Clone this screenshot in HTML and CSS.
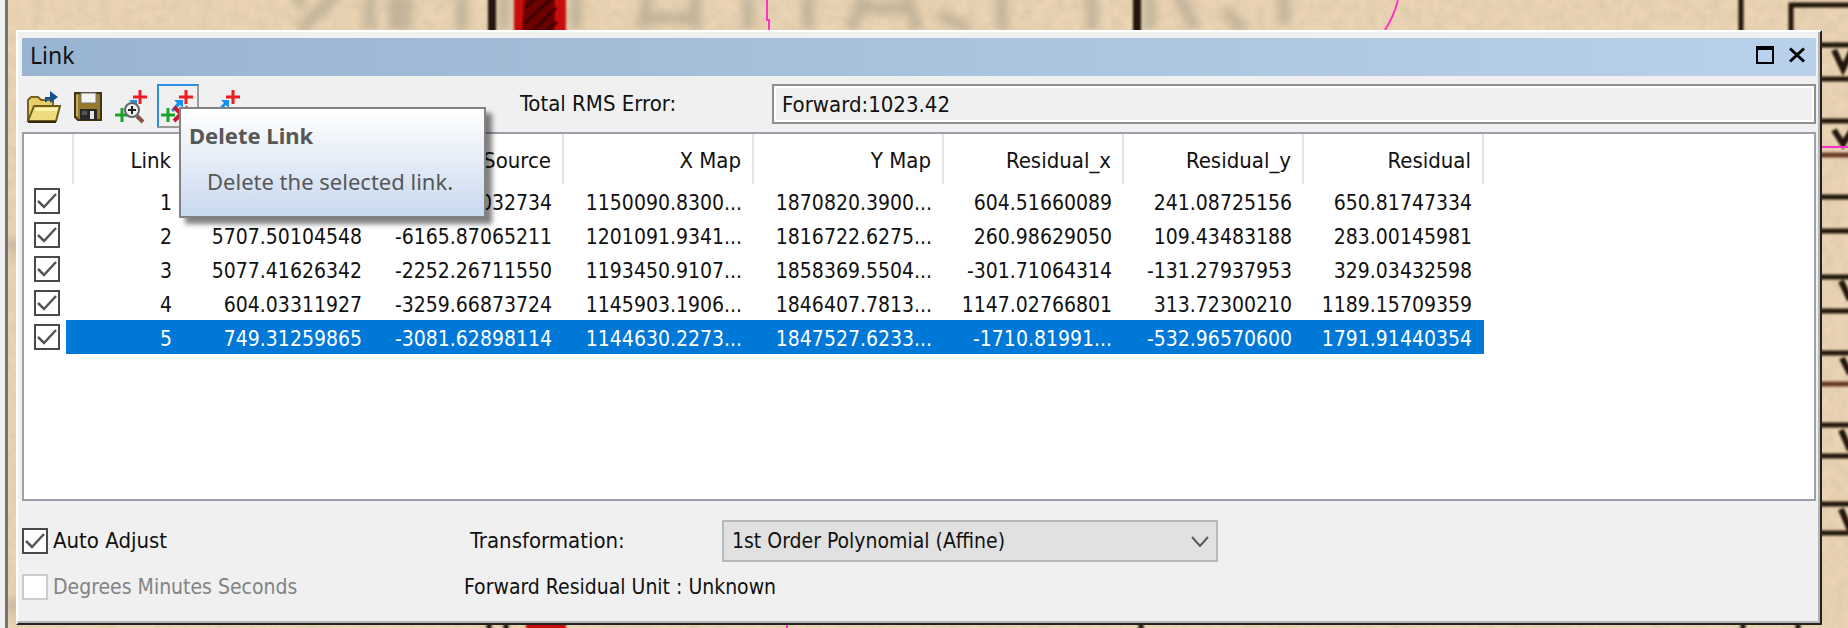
FILE: index.html
```html
<!DOCTYPE html>
<html lang="en">
<head>
<meta charset="utf-8">
<title>Link</title>
<link rel="stylesheet" href="styles.css">
</head>
<body>
<svg class="map" viewBox="0 0 1848 628" preserveAspectRatio="xMaxYMin slice" aria-hidden="true">
  <defs>
    <filter id="grain" x="0" y="0" width="100%" height="100%">
      <feTurbulence type="fractalNoise" baseFrequency="0.09" numOctaves="3" seed="4"/>
      <feColorMatrix values="0 0 0 0 .5  0 0 0 0 .4  0 0 0 0 .28  .9 0 0 0 -.3"/>
    </filter>
    <filter id="soft"><feGaussianBlur stdDeviation="4"/></filter>
    <filter id="ink" x="-5%" y="-5%" width="110%" height="110%"><feGaussianBlur stdDeviation="0.8"/></filter>
  </defs>
  <rect width="1848" height="628" fill="#ead4b3"/>
  <g filter="url(#soft)" fill="none" stroke="#9c9583" stroke-opacity=".5">
    <path stroke-width="12" d="M300-5V8M335-5L300 30M370-5V30M394-5V30M406-5V30M462-5V30M504-5V30M576-5V30"/>
    <path stroke-width="12" d="M648-5L642 30M642 18H700M695-5V30M748-5V30M808-5V30M850 30L866-5M860 8H905M905-5L918 30M938 14L970 30M1002-5V30M1092-5V30M1150-5V30M1178-5L1196 28M1224 10L1245 30M1284-5V24"/>
    <path stroke-width="14" stroke-opacity=".5" d="M8 246H18M8 606H18"/>
  </g>
  <rect x="8" width="1840" height="628" filter="url(#grain)" opacity=".5"/>
  <g filter="url(#ink)">
    <path fill="#c90808" d="M514-4H566V32H514z"/>
    <path fill="#6e0305" d="M524-4H555V32H522z"/>
    <path stroke="#290103" stroke-width="3" d="M525 8L538-4M524 24L552-2M532 32L556 8M545 32L557 22"/>
    <g fill="none" stroke="#211708" stroke-width="5">
      <path stroke-width="8" d="M492-4V34M1137-4V34"/>
      <path d="M1741-4V34M1791 34V5H1850"/>
      <path d="M1820 45H1850M1820 79H1850M1820 121H1850M1820 197H1850M1820 231H1850M1820 277H1850M1820 311H1850M1820 353H1850M1820 425H1850M1820 456H1850M1820 504H1850M1820 533H1850"/>
      <path stroke="#6b3b28" d="M1820 155H1850M1820 384H1850"/>
      <path stroke-width="6" d="M1834 50L1843 69L1852 50M1834 130L1843 144L1852 130M1841 281L1850 300M1842 358L1850 374M1841 430L1850 450M1841 509L1850 530"/>
      <path d="M489 622V634M506 622V634M1141 622V634M1743 622V634M1798 622V634"/>
    </g>
    <path fill="#c90808" d="M526 622H566V634H526z"/>
  </g>
  <path fill="none" stroke="#ff32c8" stroke-width="2" d="M767 0V20H769V30M1398 0Q1394 16 1385 30M1820 147H1848M787 622V628"/>
  <rect width="6" height="628" fill="#f0f0f0"/>
  <rect x="5" width="3" height="628" fill="#77746f"/>
</svg>

<main class="window">
  <header class="titlebar">
    <h1 class="title">Link</h1>
    <div class="window-buttons">
      <button class="window-button" aria-label="Maximize"><svg width="18" height="18" viewBox="0 0 18 18"><path d="M1 1H17V17H1z" fill="none" stroke="#000" stroke-width="2"/><path d="M0 0H18V4H0z"/></svg></button>
      <button class="window-button" aria-label="Close"><svg width="18" height="18" viewBox="0 0 18 18"><path d="M2 2.500L16 15.500M16 2.500L2 15.500" stroke="#000" stroke-width="3"/></svg></button>
    </div>
  </header>

  <section class="toolbar">
    <div class="tools">
      <button class="tool" aria-label="Load">
        <svg width="36" height="36" viewBox="0 0 36 36"><path d="M3 33V12L6 9H13L16 12H28V18" fill="#e9cf69" stroke="#796321" stroke-width="2"/><path d="M3 33L9 18H35L31 33z" fill="#eddc7e" stroke="#705b1d" stroke-width="2"/><path d="M11 20H33L32 23H10z" fill="#fff3a8"/><path d="M3 34H31" stroke="#352b10" stroke-width="2"/><path d="M20 14V9H25V3L33 9L25 15V11H22V14z" fill="#15518c"/></svg>
      </button>
      <button class="tool" aria-label="Save">
        <svg width="36" height="36" viewBox="0 0 36 36"><path d="M5 5H31V32H8L5 29z" fill="#967a2b" stroke="#40330f" stroke-width="2"/><path d="M7 7V28" stroke="#c6ad61" stroke-width="2"/><path d="M11 5H26V15H11z" fill="#f4f4f4" stroke="#777" stroke-width="1"/><path d="M10 21H27V32H10z" fill="#292929"/><path d="M20 23H24V31H20z" fill="#e4e4e4"/><path d="M12 23H17V27H12z" fill="#555"/></svg>
      </button>
      <button class="tool" aria-label="Zoom to Link">
        <svg width="36" height="36" viewBox="0 0 36 36"><path d="M25 2V16M18 9H32" stroke="#ed1c24" stroke-width="3"/><path d="M7 20V34M0 27H14" stroke="#18a329" stroke-width="3"/><path d="M14 12H22V20L19 17L11 25L9 23L17 15z" fill="#1691ef"/><path d="M22 28L28 34" stroke="#8b5141" stroke-width="4"/><circle cx="17" cy="22" r="7" fill="#eee" stroke="#62676a" stroke-width="2"/><path d="M17 18V26M13 22H21" stroke="#222" stroke-width="2"/></svg>
      </button>
      <div class="tool-with-tip">
        <button class="tool tool-hot" aria-label="Delete Link" aria-describedby="tip">
          <svg width="36" height="36" viewBox="0 0 36 36"><path d="M26 2V16M19 9H33" stroke="#ed1c24" stroke-width="3"/><path d="M8 20V34M1 27H15" stroke="#18a329" stroke-width="3"/><path d="M14 12H23V20L20 17L13 24L11 22L17 15z" fill="#1691ef"/><path d="M14 19L28 33M28 19L14 33" stroke="#c41d2c" stroke-width="4"/></svg>
        </button>
        <div class="tooltip" role="tooltip" id="tip">
          <strong class="tooltip-title">Delete Link</strong>
          <p class="tooltip-text">Delete the selected link.</p>
        </div>
      </div>
      <button class="tool" aria-label="Auto Registration">
        <svg width="36" height="36" viewBox="0 0 36 36"><path d="M28 2V16M21 9H35" stroke="#ed1c24" stroke-width="3"/><path d="M16 12H24V20L21 17L13 25L11 23L19 15z" fill="#1691ef"/></svg>
      </button>
    </div>
    <label class="rms-label" for="rms">Total RMS Error:</label>
    <input class="rms-value" id="rms" type="text" value="Forward:1023.42" readonly>
  </section>

  <section class="list">
    <table class="links">
      <colgroup><col class="col-check"><col class="col-link"><col class="col-coord"><col class="col-coord"><col class="col-coord"><col class="col-coord"><col class="col-residual"><col class="col-residual"><col class="col-residual"></colgroup>
      <thead>
        <tr><th></th><th>Link</th><th>X Source</th><th>Y Source</th><th>X Map</th><th>Y Map</th><th>Residual_x</th><th>Residual_y</th><th>Residual</th></tr>
      </thead>
      <tbody>
        <tr><td><input class="check" type="checkbox" aria-label="Link 1" checked></td><td>1</td><td></td><td>-3412.61032734</td><td>1150090.8300...</td><td>1870820.3900...</td><td>604.51660089</td><td>241.08725156</td><td>650.81747334</td></tr>
        <tr><td><input class="check" type="checkbox" aria-label="Link 2" checked></td><td>2</td><td>5707.50104548</td><td>-6165.87065211</td><td>1201091.9341...</td><td>1816722.6275...</td><td>260.98629050</td><td>109.43483188</td><td>283.00145981</td></tr>
        <tr><td><input class="check" type="checkbox" aria-label="Link 3" checked></td><td>3</td><td>5077.41626342</td><td>-2252.26711550</td><td>1193450.9107...</td><td>1858369.5504...</td><td>-301.71064314</td><td>-131.27937953</td><td>329.03432598</td></tr>
        <tr><td><input class="check" type="checkbox" aria-label="Link 4" checked></td><td>4</td><td>604.03311927</td><td>-3259.66873724</td><td>1145903.1906...</td><td>1846407.7813...</td><td>1147.02766801</td><td>313.72300210</td><td>1189.15709359</td></tr>
        <tr class="selected"><td><input class="check" type="checkbox" aria-label="Link 5" checked></td><td>5</td><td>749.31259865</td><td>-3081.62898114</td><td>1144630.2273...</td><td>1847527.6233...</td><td>-1710.81991...</td><td>-532.96570600</td><td>1791.91440354</td></tr>
      </tbody>
    </table>
  </section>

  <footer class="options">
    <label class="option"><input class="check" type="checkbox" checked>Auto Adjust</label>
    <label class="transform-label" for="transform">Transformation:</label>
    <div class="select-box">
      <select class="select" id="transform"><option>1st Order Polynomial (Affine)</option></select>
      <svg class="chevron" width="18" height="12" viewBox="0 0 18 12"><path d="M1 1L9 10L17 1" fill="none" stroke="#5a5a5a" stroke-width="2"/></svg>
    </div>
    <label class="option option-off"><input class="check" type="checkbox" disabled>Degrees Minutes Seconds</label>
    <p class="unit">Forward Residual Unit : Unknown</p>
  </footer>
</main>
</body>
</html>
```

FILE: styles.css
```css
* { box-sizing: border-box; }

body {
  margin: 0;
  min-height: 100vh;
  display: flex;
  padding: 30px 26px 3px 16px;
  position: relative;
  background: #e8d1ae;
  color: #111;
  font: 21px/26px "DejaVu Sans Condensed", "DejaVu Sans", sans-serif;
}

h1, p { margin: 0; font: inherit; }
button, input, select { font: inherit; color: inherit; margin: 0; }

.map {
  position: absolute;
  inset: 0;
  width: 100%;
  height: 100%;
}

.window {
  position: relative;
  flex: 1;
  min-width: 0;
  display: flex;
  flex-direction: column;
  padding: 6px 4px 0;
  background: #f0f0f0;
  border: 2px solid #fff;
  border-right-color: #222;
  border-bottom-color: #222;
  box-shadow: inset -2px -2px #b5b5b5;
}

.titlebar {
  display: flex;
  align-items: center;
  justify-content: space-between;
  height: 38px;
  padding: 0 10px 4px 8px;
  background: linear-gradient(90deg, #99b4d1, #b9d1ea);
}

.title { font: 23px/30px "Noto Sans", sans-serif; }

.window-buttons { display: flex; gap: 14px; }

.window-button {
  display: flex;
  padding: 0;
  border: 0;
  background: none;
}

.toolbar {
  display: flex;
  align-items: center;
  height: 56px;
  font-size: 22px;
}

.tools { display: flex; gap: 3px; width: 498px; padding-top: 4px; }

.tool {
  display: flex;
  align-items: center;
  justify-content: center;
  width: 42px;
  height: 44px;
  padding: 0;
  border: 2px solid transparent;
  background: none;
}

.tool-hot {
  border-color: #2b8fe3 #9a9a9a #9a9a9a #2b8fe3;
}

.tool-with-tip { position: relative; }

.tooltip {
  position: absolute;
  z-index: 1;
  left: 22px;
  top: 23px;
  width: 307px;
  height: 111px;
  padding: 11px 8px;
  border: 2px solid #828282;
  background: linear-gradient(#fff, #c9d9ef);
  box-shadow: 6px 6px 5px rgba(0, 0, 0, .5);
  color: #575757;
  font: 22px/30px "Noto Sans", sans-serif;
}

.tooltip-title { display: block; }
.tooltip-text { padding: 16px 0 0 18px; white-space: nowrap; }

.rms-label { width: 252px; }

.rms-value {
  flex: 1;
  min-width: 0;
  height: 40px;
  padding: 0 8px;
  border: 2px solid #8f8f8f;
  outline: 0;
  background: #f0f0f0;
  box-shadow: inset 0 0 0 2px #fff;
}

.list {
  flex: 1;
  border: 2px solid #9a9fa8;
  background: #fff;
}

.links {
  width: 1460px;
  table-layout: fixed;
  border-collapse: separate;
  border-spacing: 0;
  text-align: right;
}

.col-check { width: 50px; }
.col-link { width: 110px; }
.col-coord { width: 190px; }
.col-residual { width: 180px; }

.links th {
  height: 50px;
  padding: 4px 11px 0 0;
  border-right: 2px solid #e5e5e5;
  font-size: 22px;
  font-weight: normal;
}

.links td {
  height: 34px;
  padding: 3px 12px 0 0;
  white-space: nowrap;
}

.links td:first-child { padding: 4px 0 4px 10px; }

.selected td:not(:first-child) { background: #0078d7; color: #fff; }
.selected td:nth-child(2) { box-shadow: -8px 0 #0078d7; }

.check {
  appearance: none;
  display: block;
  flex: none;
  width: 26px;
  height: 26px;
  border: 2px solid #4a4a4a;
  background: #fff;
}

.check:checked {
  background: #fff url("data:image/svg+xml,%3Csvg xmlns='http://www.w3.org/2000/svg' viewBox='0 0 22 22'%3E%3Cpath d='M2 11L8 17L20 4' fill='none' stroke='%23555' stroke-width='2.500'/%3E%3C/svg%3E") center / 22px 22px;
}

.check:disabled { border-color: #ccc; }

.options {
  display: grid;
  grid-template-columns: 442px 258px 496px;
  grid-template-rows: 42px 40px;
  row-gap: 5px;
  align-items: center;
  padding: 19px 0 16px;
}

.option { display: flex; align-items: center; gap: 5px; font-size: 22px; }
.option-off { color: #838383; font-size: 21px; }
.transform-label { padding-left: 6px; font-size: 22px; }
.unit { grid-column: 2 / 4; }

.select-box { position: relative; }

.select {
  appearance: none;
  display: block;
  width: 100%;
  height: 42px;
  padding: 0 40px 0 8px;
  border: 2px solid #b8b8b8;
  border-radius: 0;
  background: #e1e1e1;
}

.chevron {
  position: absolute;
  right: 9px;
  top: 16px;
  pointer-events: none;
}
```
